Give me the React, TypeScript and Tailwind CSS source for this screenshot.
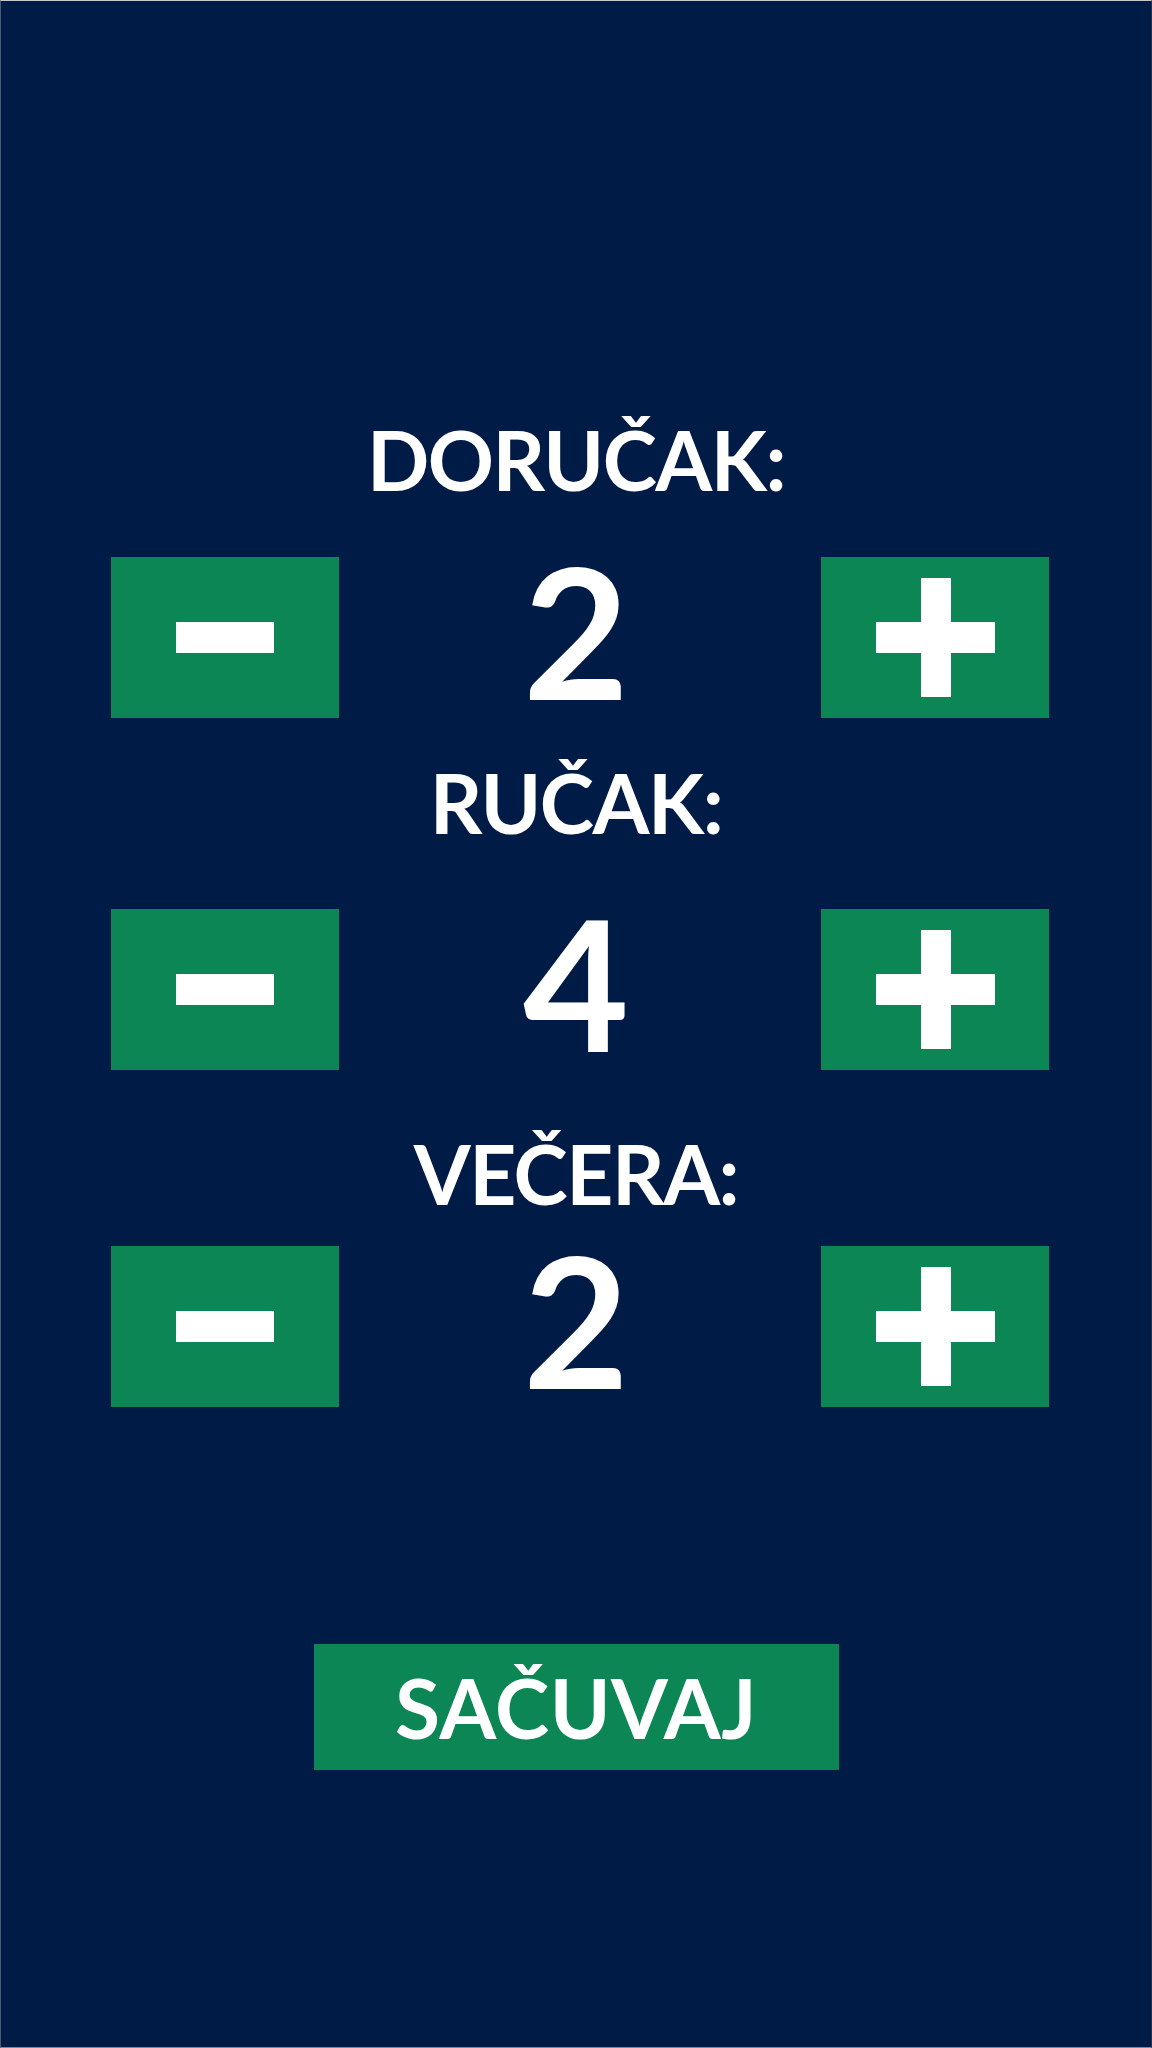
import React, { useState } from "react";

const font = { fontFamily: "Lato, 'Noto Sans', sans-serif" };

function MinusIcon() {
  return <div className="w-[98px] h-[31px] bg-white" />;
}

function PlusIcon() {
  return (
    <div className="relative w-[119px] h-[119px]">
      <div className="absolute left-[45px] top-0 w-[30px] h-[119px] bg-white" />
      <div className="absolute left-0 top-[44px] w-[119px] h-[31px] bg-white" />
    </div>
  );
}

function Row({ value, onMinus, onPlus }: { value: number; onMinus: () => void; onPlus: () => void }) {
  return (
    <div className="grid grid-cols-[228px_1fr_228px] items-center pl-[110px] pr-[102px]">
      <button
        onClick={onMinus}
        className="h-[161px] w-[228px] bg-[#0b8654] flex items-center justify-center"
        aria-label="minus"
      >
        <MinusIcon />
      </button>
      <div
        className="text-white text-[183px] font-bold leading-none text-center mr-[8px] -translate-y-[8px]"
        style={font}
      >
        {value}
      </div>
      <button
        onClick={onPlus}
        className="h-[161px] w-[228px] bg-[#0b8654] flex items-center justify-center"
        aria-label="plus"
      >
        <PlusIcon />
      </button>
    </div>
  );
}

function Label({ text, className }: { text: string; className: string }) {
  return (
    <div
      className={"text-white text-[82px] font-bold leading-none text-center tracking-[-1.5px] " + className}
      style={font}
    >
      {text}
    </div>
  );
}

export default function App() {
  const [d, setD] = useState(2);
  const [r, setR] = useState(4);
  const [v, setV] = useState(2);
  return (
    <div
      className="w-[1152px] h-[2048px] bg-[#001b46] border-t border-t-[#c4c8cf] border-l border-l-[#4a5a74] border-b border-b-[#7d879a] border-r border-r-[#1f3050] flex flex-col"
      style={font}
    >
      <Label text="DORUČAK:" className="mt-[417px]" />
      <div className="mt-[46px]">
        <Row value={d} onMinus={() => setD(Math.max(0, d - 1))} onPlus={() => setD(d + 1)} />
      </div>
      <Label text="RUČAK:" className="mt-[32px]" />
      <div className="mt-[55px]">
        <Row value={r} onMinus={() => setR(Math.max(0, r - 1))} onPlus={() => setR(r + 1)} />
      </div>
      <Label text="VEČERA:" className="mt-[51px]" />
      <div className="mt-[21px]">
        <Row value={v} onMinus={() => setV(Math.max(0, v - 1))} onPlus={() => setV(v + 1)} />
      </div>
      <div className="mt-[226px] flex justify-center">
        <button
          className="w-[525px] h-[126px] bg-[#0b8654] text-white text-[82px] font-bold leading-none tracking-[0.5px] flex items-center justify-center"
          style={font}
        >
          SAČUVAJ
        </button>
      </div>
    </div>
  );
}
